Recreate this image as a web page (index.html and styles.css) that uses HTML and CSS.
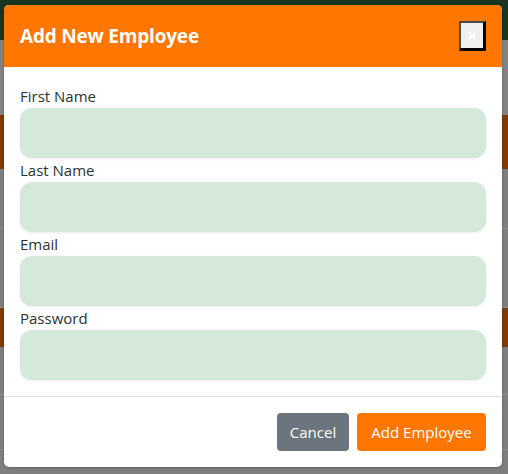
FILE: index.html
```html
<!DOCTYPE html>
<html>
<head>
<meta charset="utf-8">
<link rel="stylesheet" href="styles.css">
</head>
<body>
<div class="page">
  <div class="topbar"></div>
  <div class="texture"></div>
  <div class="stripe"></div>
  <div class="row row-a"></div>
  <div class="row row-b"></div>
  <div class="stripe stripe-2"></div>
  <div class="row row-c"></div>
  <div class="row row-d"></div>
</div>
<div class="modal">
  <div class="modal-header">
    <h5 class="modal-title">Add New Employee</h5>
    <button class="close-btn" type="button">×</button>
  </div>
  <div class="modal-body">
    <label class="field-label">First Name</label>
    <div class="field-input"></div>
    <label class="field-label">Last Name</label>
    <div class="field-input"></div>
    <label class="field-label">Email</label>
    <div class="field-input"></div>
    <label class="field-label">Password</label>
    <div class="field-input"></div>
  </div>
  <div class="modal-footer">
    <button class="btn btn-cancel" type="button">Cancel</button>
    <button class="btn btn-add" type="button">Add Employee</button>
  </div>
</div>
</body>
</html>
```
FILE: styles.css
```css
html, body {
  margin: 0;
  padding: 0;
}
body {
  width: 508px;
  height: 474px;
  overflow: hidden;
  background: #7f7f7f;
  font-family: "Open Sans", "Noto Sans", sans-serif;
  position: relative;
}
.page {
  display: flex;
  flex-direction: column;
}
.topbar {
  height: 40px;
  background: #183520;
}
.texture {
  height: 75px;
  background: #838383;
}
.stripe {
  height: 54px;
  background: #803b00;
}
.stripe-2 {
  height: 39px;
}
.row {
  border-bottom: 1px solid #8e8e8e;
}
.row-a { height: 59px; }
.row-b { height: 78px; }
.row-c { height: 47px; }
.row-d { height: 54px; }

.modal {
  position: absolute;
  top: 5px;
  left: 4px;
  width: 498px;
  background: #fff;
  border-radius: 5px;
  overflow: hidden;
  box-shadow: 0 1px 3px rgba(0,0,0,0.25);
}
.modal-header {
  display: flex;
  align-items: center;
  justify-content: space-between;
  height: 62px;
  box-sizing: border-box;
  padding: 0 16px;
  background: #ff7600;
}
.modal-title {
  margin: 0;
  color: #fff;
  font-size: 19px;
  letter-spacing: -0.2px;
  font-weight: 700;
  line-height: 30px;
}
.close-btn {
  width: 27px;
  height: 30px;
  box-sizing: border-box;
  padding: 0;
  background: #efefef;
  color: #fff;
  font-size: 17px;
  line-height: 1;
  border-style: solid;
  border-width: 2px 3px 3px 2px;
  border-color: #4a4a4a #000 #000 #4a4a4a;
  font-family: "Liberation Sans", sans-serif;
  font-weight: 700;
}
.modal-body {
  padding: 17px 16px 16px;
  display: flex;
  flex-direction: column;
}
.field-label {
  color: #2b3330;
  font-size: 15px;
  line-height: 24px;
  height: 24px;
}
.field-input {
  height: 50px;
  background: #d4e9da;
  border-radius: 12px;
  box-shadow: 0 1px 3px rgba(0,0,0,0.08);
}
.modal-footer {
  border-top: 1px solid #dee2e6;
  padding: 16px;
  display: flex;
  justify-content: flex-end;
  gap: 8px;
}
.btn {
  height: 38px;
  padding: 0 12px;
  border: none;
  border-radius: 4px;
  color: #fff;
  font-family: "Open Sans", "Noto Sans", sans-serif;
  font-size: 15px;
}
.btn-cancel {
  background: #6c757d;
  width: 72px;
}
.btn-add {
  background: #ff7600;
  width: 129px;
}
```
